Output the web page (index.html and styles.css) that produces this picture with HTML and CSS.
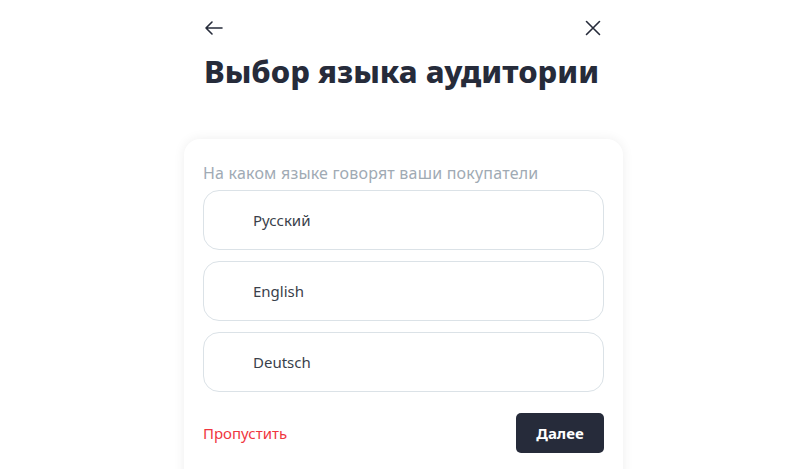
FILE: index.html
```html
<!DOCTYPE html>
<html lang="ru">
<head>
<meta charset="UTF-8">
<meta name="viewport" content="width=device-width, initial-scale=1.0">
<title>Выбор языка аудитории</title>
<link rel="stylesheet" href="styles.css">
</head>
<body>

<div class="page">
    <div class="top-bar">
        <button class="icon-btn" aria-label="Назад">
            <svg width="20" height="20" viewBox="0 0 20 20" fill="none" stroke="#262b3a" stroke-width="1.6" stroke-linecap="round" stroke-linejoin="round">
                <path d="M18 10H2M8 4l-6 6 6 6"/>
            </svg>
        </button>
        <button class="icon-btn" aria-label="Закрыть">
            <svg width="20" height="20" viewBox="0 0 20 20" fill="none" stroke="#262b3a" stroke-width="1.6" stroke-linecap="round">
                <path d="M3.5 3.5l13 13M16.5 3.5l-13 13"/>
            </svg>
        </button>
    </div>
    <h1 class="title">Выбор языка аудитории</h1>

    <div class="card">
        <p class="hint">На каком языке говорят ваши покупатели</p>
        <div class="options">
            <label class="option"><span>Русский</span></label>
            <label class="option"><span>English</span></label>
            <label class="option"><span>Deutsch</span></label>
        </div>
        <div class="actions">
            <a href="#" class="skip">Пропустить</a>
            <button class="next">Далее</button>
        </div>
    </div>
</div>

</body>
</html>
```
FILE: styles.css
```css
body {
    font-family: "Noto Sans", Arial, sans-serif;
    margin: 0;
    padding: 0;
    background-color: #fff;
    color: #262b3a;
}
.page {
    width: 439px;
    margin: 0 auto;
    padding-left: 7px;
}
.top-bar {
    display: flex;
    justify-content: space-between;
    padding: 18px 20px 0 20px;
}
.icon-btn {
    width: 20px;
    height: 20px;
    padding: 0;
    border: none;
    background: none;
    cursor: pointer;
}
.title {
    margin: 10px 20px 0 20px;
    font-size: 31px;
    font-weight: 800;
    line-height: 46px;
    white-space: nowrap;
    letter-spacing: 0;
}
.card {
    margin-top: 45px;
    padding: 20px 19px 20px 19px;
    border-radius: 16px;
    background-color: #fff;
    box-shadow: 0px 0px 12px rgba(0, 0, 0, 0.07);
}
.hint {
    margin: 3px 0 0 0;
    font-size: 16px;
    line-height: 22px;
    letter-spacing: 0.2px;
    color: #a0aab4;
}
.options {
    display: flex;
    flex-direction: column;
    gap: 11px;
    margin-top: 6px;
}
.option {
    display: flex;
    align-items: center;
    height: 58px;
    padding-left: 49px;
    border: 1px solid #dbe2e7;
    border-radius: 16px;
    font-size: 15px;
    color: #3a3f4b;
    cursor: pointer;
}
.actions {
    display: flex;
    justify-content: space-between;
    align-items: center;
    margin-top: 21px;
    padding-bottom: 40px;
}
.skip {
    color: #f0363f;
    font-size: 15px;
    text-decoration: none;
}
.next {
    width: 88px;
    height: 40px;
    border: none;
    border-radius: 5px;
    background-color: #262b3a;
    color: #fff;
    font-family: inherit;
    font-size: 15px;
    font-weight: 700;
    cursor: pointer;
}
```
